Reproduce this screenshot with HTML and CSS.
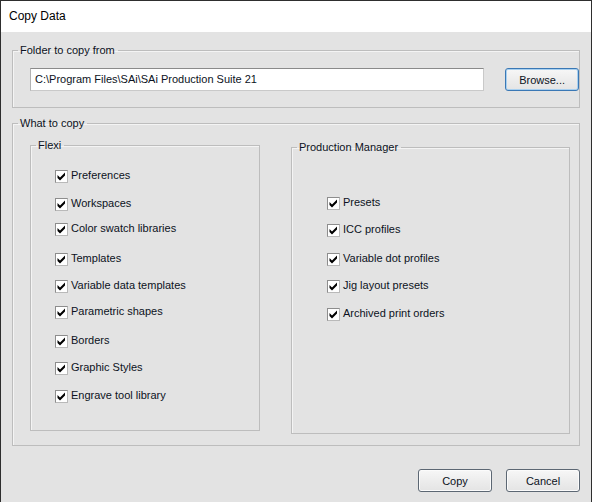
FILE: index.html
```html
<!DOCTYPE html>
<html lang="en">
<head>
<meta charset="utf-8">
<title>Copy Data</title>
<link rel="stylesheet" href="styles.css">
</head>
<body>
<div class="window">
  <div class="titlebar">Copy Data</div>
  <div class="content">
    <fieldset class="group group-folder">
      <legend>Folder to copy from</legend>
      <div class="folder-row">
        <div class="textbox">C:\Program Files\SAi\SAi Production Suite 21</div>
        <button class="btn btn-focus" type="button">Browse...</button>
      </div>
    </fieldset>

    <fieldset class="group group-what">
      <legend>What to copy</legend>
      <div class="what-row">
        <fieldset class="group group-flexi">
          <legend>Flexi</legend>
          <div class="checklist checklist-flexi">
            <div class="check-row"><span class="cb"><svg viewBox="0 0 11 11"><polygon points="1.5,4 4,6.5 9,1.5 9,4.5 4,9.5 1.5,7"/></svg></span><span class="label">Preferences</span></div>
            <div class="check-row"><span class="cb"><svg viewBox="0 0 11 11"><polygon points="1.5,4 4,6.5 9,1.5 9,4.5 4,9.5 1.5,7"/></svg></span><span class="label">Workspaces</span></div>
            <div class="check-row"><span class="cb"><svg viewBox="0 0 11 11"><polygon points="1.5,4 4,6.5 9,1.5 9,4.5 4,9.5 1.5,7"/></svg></span><span class="label">Color swatch libraries</span></div>
            <div class="check-row"><span class="cb"><svg viewBox="0 0 11 11"><polygon points="1.5,4 4,6.5 9,1.5 9,4.5 4,9.5 1.5,7"/></svg></span><span class="label">Templates</span></div>
            <div class="check-row"><span class="cb"><svg viewBox="0 0 11 11"><polygon points="1.5,4 4,6.5 9,1.5 9,4.5 4,9.5 1.5,7"/></svg></span><span class="label">Variable data templates</span></div>
            <div class="check-row"><span class="cb"><svg viewBox="0 0 11 11"><polygon points="1.5,4 4,6.5 9,1.5 9,4.5 4,9.5 1.5,7"/></svg></span><span class="label">Parametric shapes</span></div>
            <div class="check-row"><span class="cb"><svg viewBox="0 0 11 11"><polygon points="1.5,4 4,6.5 9,1.5 9,4.5 4,9.5 1.5,7"/></svg></span><span class="label">Borders</span></div>
            <div class="check-row"><span class="cb"><svg viewBox="0 0 11 11"><polygon points="1.5,4 4,6.5 9,1.5 9,4.5 4,9.5 1.5,7"/></svg></span><span class="label">Graphic Styles</span></div>
            <div class="check-row"><span class="cb"><svg viewBox="0 0 11 11"><polygon points="1.5,4 4,6.5 9,1.5 9,4.5 4,9.5 1.5,7"/></svg></span><span class="label">Engrave tool library</span></div>
          </div>
        </fieldset>

        <fieldset class="group group-pm">
          <legend>Production Manager</legend>
          <div class="checklist checklist-pm">
            <div class="check-row"><span class="cb"><svg viewBox="0 0 11 11"><polygon points="1.5,4 4,6.5 9,1.5 9,4.5 4,9.5 1.5,7"/></svg></span><span class="label">Presets</span></div>
            <div class="check-row"><span class="cb"><svg viewBox="0 0 11 11"><polygon points="1.5,4 4,6.5 9,1.5 9,4.5 4,9.5 1.5,7"/></svg></span><span class="label">ICC profiles</span></div>
            <div class="check-row"><span class="cb"><svg viewBox="0 0 11 11"><polygon points="1.5,4 4,6.5 9,1.5 9,4.5 4,9.5 1.5,7"/></svg></span><span class="label">Variable dot profiles</span></div>
            <div class="check-row"><span class="cb"><svg viewBox="0 0 11 11"><polygon points="1.5,4 4,6.5 9,1.5 9,4.5 4,9.5 1.5,7"/></svg></span><span class="label">Jig layout presets</span></div>
            <div class="check-row"><span class="cb"><svg viewBox="0 0 11 11"><polygon points="1.5,4 4,6.5 9,1.5 9,4.5 4,9.5 1.5,7"/></svg></span><span class="label">Archived print orders</span></div>
          </div>
        </fieldset>
      </div>
    </fieldset>

    <div class="actions">
      <button class="btn" type="button">Copy</button>
      <button class="btn" type="button">Cancel</button>
    </div>
  </div>
</div>
</body>
</html>
```

FILE: styles.css
```css
html, body {
  margin: 0;
  padding: 0;
  background: #e3e3e3;
}

body {
  font-family: "Liberation Sans", Arial, sans-serif;
  font-size: 11px;
  color: #0c1222;
}

.window {
  width: 592px;
  height: 502px;
  box-sizing: border-box;
  border: 1px solid #2e2e2e;
  border-bottom: none;
  background: #e3e3e3;
  overflow: hidden;
}

.titlebar {
  height: 31px;
  line-height: 31px;
  padding-left: 8px;
  background: #ffffff;
  font-size: 12px;
  color: #000;
}

.content {
  padding: 12px 11px 0 11px;
}

.group {
  margin: 0;
  padding: 0;
  min-width: 0;
  border: 1px solid #bdbdbd;
  box-shadow: inset 1px 1px 0 #f4f4f4;
}

.group > legend {
  margin-left: 5px;
  padding: 0 3px 0 2px;
  line-height: 13px;
  font-size: 11px;
}

.folder-row {
  display: flex;
  align-items: flex-start;
  gap: 21px;
  padding: 11px 0 16px 17px;
}

.textbox {
  width: 455px;
  height: 23px;
  box-sizing: border-box;
  background: #ffffff;
  border: 1px solid #c9c9c9;
  border-top-color: #8a8a8a;
  border-left-color: #b2b2b2;
  padding-left: 4px;
  line-height: 21px;
  white-space: nowrap;
  overflow: hidden;
}

.btn {
  width: 74px;
  height: 23px;
  box-sizing: border-box;
  padding: 0;
  margin: 0;
  font-family: "Liberation Sans", Arial, sans-serif;
  font-size: 11px;
  color: #0c1222;
  border: 1px solid #5c6773;
  border-radius: 3px;
  background: linear-gradient(#f7f7f7, #ececec 55%, #e4e4e4);
  box-shadow: inset 0 0 0 1px #fbfbfb;
}

.btn-focus {
  border-color: #3a78b5;
  box-shadow: inset 0 0 0 1px #a8d0f0;
}

.group-what {
  margin-top: 9px;
}

.what-row {
  display: flex;
  align-items: flex-start;
  padding: 9px 0 11px 17px;
}

.group-flexi {
  width: 230px;
  box-sizing: border-box;
}

.group-pm {
  width: 279px;
  box-sizing: border-box;
  margin-left: 31px;
  margin-top: 2px;
}

.checklist {
  display: flex;
  flex-direction: column;
}

.checklist-flexi {
  padding: 18px 0 27px 24px;
}

.checklist-pm {
  padding: 43px 0 112px 35px;
}

.check-row {
  display: flex;
  align-items: flex-start;
  gap: 3px;
  height: 13px;
}

.checklist-flexi .check-row:nth-child(2) { margin-top: 15px; }
.checklist-flexi .check-row:nth-child(3) { margin-top: 12px; }
.checklist-flexi .check-row:nth-child(4) { margin-top: 17px; }
.checklist-flexi .check-row:nth-child(5) { margin-top: 14px; }
.checklist-flexi .check-row:nth-child(6) { margin-top: 13px; }
.checklist-flexi .check-row:nth-child(7) { margin-top: 16px; }
.checklist-flexi .check-row:nth-child(8) { margin-top: 14px; }
.checklist-flexi .check-row:nth-child(9) { margin-top: 15px; }

.checklist-pm .check-row:nth-child(2) { margin-top: 14px; }
.checklist-pm .check-row:nth-child(3) { margin-top: 16px; }
.checklist-pm .check-row:nth-child(4) { margin-top: 14px; }
.checklist-pm .check-row:nth-child(5) { margin-top: 15px; }

.cb {
  width: 13px;
  height: 13px;
  box-sizing: border-box;
  flex: none;
  border: 1px solid #8d8d8d;
  border-right-color: #b9b9b9;
  border-bottom-color: #b9b9b9;
  background: #ffffff;
  display: flex;
}

.cb svg {
  width: 11px;
  height: 11px;
}

.cb polygon {
  fill: #000;
  stroke: none;
}

.label {
  line-height: 13px;
  margin-top: -1px;
  white-space: nowrap;
}

.actions {
  display: flex;
  justify-content: flex-end;
  gap: 14px;
  margin-top: 23px;
}
```
